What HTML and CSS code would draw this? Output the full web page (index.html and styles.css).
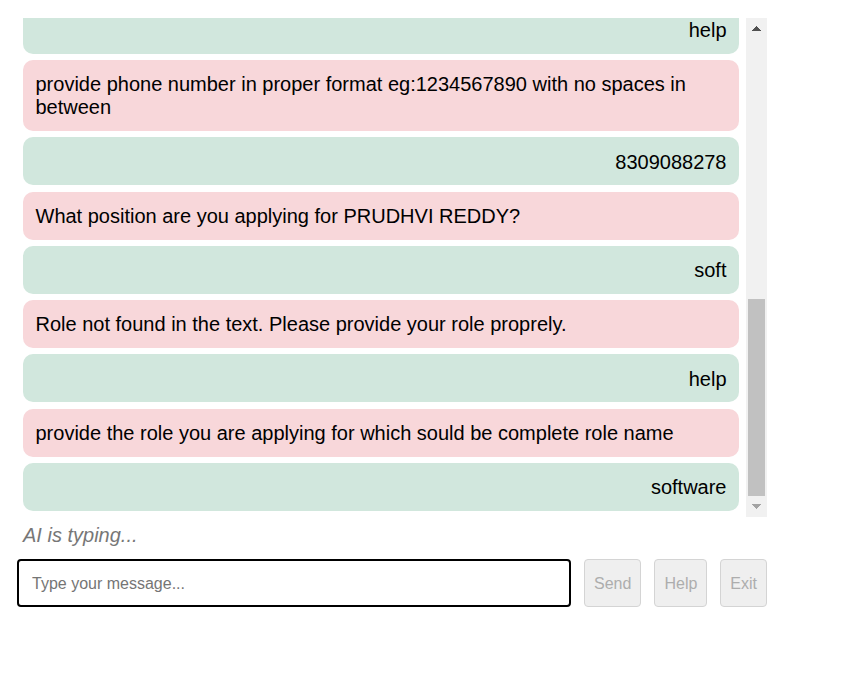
FILE: index.html
```html
<!DOCTYPE html>
<html lang="en">
<head>
<meta charset="utf-8">
<title>AI Interview Chat</title>
<link rel="stylesheet" href="styles.css">
</head>
<body>
<div class="app">
  <div class="chat-box">
    <div class="chat">
      <div class="msgs">
        <div class="msg user">help</div>
        <div class="msg bot">provide phone number in proper format eg:1234567890 with no spaces in between</div>
        <div class="msg user">8309088278</div>
        <div class="msg bot">What position are you applying for PRUDHVI REDDY?</div>
        <div class="msg user">soft</div>
        <div class="msg bot">Role not found in the text. Please provide your role proprely.</div>
        <div class="msg user">help</div>
        <div class="msg bot">provide the role you are applying for which sould be complete role name</div>
        <div class="msg user">software</div>
      </div>
    </div>
    <div class="scrollbar" aria-hidden="true">
      <div class="sb-btn sb-up"></div>
      <div class="sb-track"><div class="sb-thumb"></div></div>
      <div class="sb-btn sb-down"></div>
    </div>
  </div>
  <div class="typing">AI is typing...</div>
  <div class="input-row">
    <input class="msg-input" type="text" placeholder="Type your message..." autofocus>
    <button class="btn" disabled>Send</button>
    <button class="btn" disabled>Help</button>
    <button class="btn" disabled>Exit</button>
  </div>
</div>
</body>
</html>
```
FILE: styles.css
```css
html, body {
  margin: 0;
  padding: 0;
  background: #ffffff;
}

body {
  font-family: "Liberation Sans", Arial, sans-serif;
  color: #000;
}

.app {
  width: 750px;
  padding: 18px 0 0 17px;
}

.chat-box {
  display: flex;
  height: 499px;
}

.chat {
  flex: 1;
  min-width: 0;
  overflow: hidden;
  padding: 0 7px 0 6px;
  display: flex;
  flex-direction: column-reverse;
}

.msgs {
  display: block;
}

.msg {
  margin: 6.25px 0;
  padding: 13.25px 12.5px 11.75px;
  border-radius: 10px;
  font-size: 20px;
  line-height: 23px;
}

.msg.user {
  background: #d1e7dd;
  text-align: right;
}

.msg.bot {
  background: #f8d7da;
  text-align: left;
}

.scrollbar {
  width: 21px;
  flex: none;
  display: flex;
  flex-direction: column;
  background: #f1f1f1;
}

.sb-btn {
  height: 21px;
  flex: none;
  background-repeat: no-repeat;
  background-position: center;
  background-size: 9px 5px;
}

.sb-up {
  background-image: conic-gradient(from 135deg at 50% 0, #505050 0deg 90deg, transparent 90deg);
}

.sb-down {
  background-image: conic-gradient(from -45deg at 50% 100%, #a3a3a3 0deg 90deg, transparent 90deg);
}

.sb-track {
  flex: 1;
  display: flex;
  flex-direction: column;
  justify-content: flex-end;
}

.sb-thumb {
  height: 197px;
  margin: 0 2px;
  background: #c1c1c1;
}

.typing {
  margin-top: 6.5px;
  padding-left: 6px;
  font-size: 20px;
  line-height: 23px;
  font-style: italic;
  color: #777;
}

.input-row {
  display: flex;
  gap: 13px;
  margin-top: 12.5px;
  height: 48px;
}

.msg-input {
  flex: 1;
  min-width: 0;
  box-sizing: border-box;
  height: 48px;
  border: 2px solid #000;
  border-radius: 4px;
  padding: 2px 13px 0;
  font-family: "Liberation Sans", Arial, sans-serif;
  font-size: 16px;
  color: #111;
  outline: none;
  background: #fff;
  caret-color: #000;
}

.msg-input::placeholder {
  color: #757575;
}

.btn {
  box-sizing: border-box;
  height: 48px;
  padding: 2px 9px 0;
  border: 1px solid #d4d4d4;
  border-radius: 4px;
  background: #efefef;
  color: #adadad;
  font-family: "Liberation Sans", Arial, sans-serif;
  font-size: 16px;
}
```
